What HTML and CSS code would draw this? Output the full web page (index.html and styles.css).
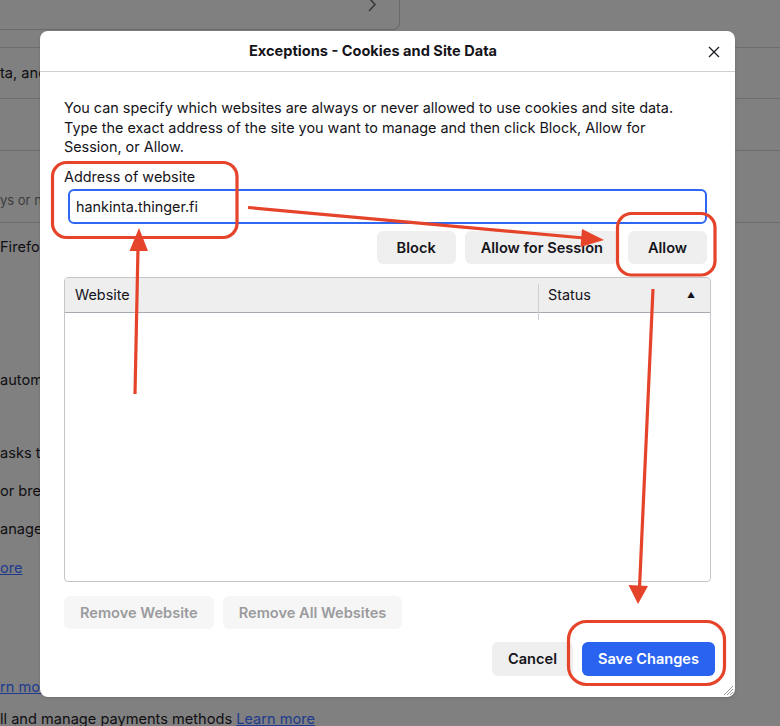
FILE: index.html
```html
<!DOCTYPE html>
<html lang="en">
<head>
<meta charset="utf-8">
<title>Exceptions - Cookies and Site Data</title>
<link rel="stylesheet" href="styles.css">
</head>
<body>
<div class="page">
  <div class="topcard">
    <svg class="chev" width="12" height="14" viewBox="0 0 12 14"><polyline points="2,-2 8,4.5 2,11" fill="none" stroke="#3a3a3a" stroke-width="1.6"/></svg>
  </div>
  <div class="gap17"></div>
  <div class="bg-row r1"><span class="bg-text">ta, and site data</span></div>
  <div class="bg-row r2"></div>
  <div class="bg-row r3"><span class="bg-small">ys or never</span></div>
  <div class="bg-row r4">
    <p class="bg-line l1">Firefox</p>
    <p class="bg-line l2">automatically</p>
    <p class="bg-line l3">asks to</p>
    <p class="bg-line l4">or breaches</p>
    <p class="bg-line l5">anage</p>
    <p class="bg-line l6"><a class="bg-link">ore</a></p>
    <p class="bg-line l7"><a class="bg-link">rn more</a></p>
    <p class="bg-line l8">ll and manage payments methods <a class="bg-link">Learn more</a></p>
  </div>
</div>

<div class="dialog">
  <div class="dlg-header">
    <h1 class="dlg-title">Exceptions - Cookies and Site Data</h1>
    <svg class="close" width="12" height="12" viewBox="0 0 12 12"><path d="M1 1 L11 11 M11 1 L1 11" stroke="#1c1b22" stroke-width="1.3" fill="none"/></svg>
  </div>
  <div class="dlg-body">
    <p class="desc">You can specify which websites are always or never allowed to use cookies and site data.<br>Type the exact address of the site you want to manage and then click Block, Allow for<br>Session, or Allow.</p>
    <label class="field-label">Address of website</label>
    <div class="input">hankinta.thinger.fi</div>
    <div class="btn-row">
      <button class="btn">Block</button>
      <button class="btn">Allow for Session</button>
      <button class="btn">Allow</button>
    </div>
    <div class="table">
      <div class="thead">
        <div class="th th-site">Website</div>
        <div class="th th-status">Status<span class="sort">&#9650;</span></div>
      </div>
      <div class="tbody"></div>
    </div>
    <div class="remove-row">
      <button class="btn disabled">Remove Website</button>
      <button class="btn disabled">Remove All Websites</button>
    </div>
    <div class="footer">
      <button class="btn">Cancel</button>
      <button class="btn primary">Save Changes</button>
    </div>
  </div>
  <svg class="grip" width="12" height="12" viewBox="0 0 12 12"><path d="M2 11 L11 2 M5 11 L11 5 M8 11 L11 8" stroke="#9a9a9a" stroke-width="1" fill="none"/></svg>
</div>

<svg class="annot" width="780" height="726" viewBox="0 0 780 726">
  <g fill="none" stroke="#e5432a" stroke-width="3.2">
    <rect x="52.5" y="162.5" width="184.5" height="75" rx="14"/>
    <rect x="617.5" y="213.5" width="97.5" height="61.5" rx="14"/>
    <rect x="568.5" y="621.5" width="156" height="63" rx="18"/>
    <line x1="248" y1="207.5" x2="584" y2="238"/>
    <line x1="135" y1="394" x2="138" y2="248"/>
    <line x1="653" y1="289" x2="639.5" y2="588"/>
  </g>
  <g fill="#e5432a">
    <polygon points="604,240 582,229 580.5,247"/>
    <polygon points="139,228 129.5,251 148,251"/>
    <polygon points="638,604 628.5,585 648,586"/>
  </g>
</svg>
</body>
</html>
```
FILE: styles.css
```css
html, body {
  margin: 0;
  padding: 0;
}
body {
  width: 780px;
  height: 726px;
  overflow: hidden;
  background: #808080;
  font-family: Inter, "Liberation Sans", sans-serif;
  position: relative;
}

/* background page (dimmed) */
.page {
  display: flex;
  flex-direction: column;
  color: #0f0e12;
  font-size: 14.6px;
}
.topcard {
  width: 399px;
  height: 29px;
  border-right: 1px solid #6a6a6a;
  border-bottom: 1px solid #6a6a6a;
  border-bottom-right-radius: 7px;
  display: flex;
  justify-content: flex-end;
  align-items: flex-start;
  box-sizing: content-box;
}
.chev {
  margin-right: 20px;
  margin-top: 0;
}
.gap17 { height: 17px; }
.bg-row {
  border-top: 1px solid #6d6d6d;
  display: flex;
  align-items: center;
  white-space: nowrap;
}
.r1 { height: 50px; }
.r2 { height: 51px; }
.r3 { height: 71px; align-items: flex-end; }
.r4 { display: block; border-top: 1px solid #6d6d6d; }
.bg-text { line-height: 20px; }
.bg-small {
  font-size: 13px;
  color: #3c3c3e;
  line-height: 16px;
  margin-bottom: 14px;
}
.bg-line {
  margin: 0;
  line-height: 20px;
  white-space: nowrap;
}
.l1 { margin-top: 14px; }
.l2 { margin-top: 113px; }
.l3 { margin-top: 53px; }
.l4 { margin-top: 18px; }
.l5 { margin-top: 18px; }
.l6 { margin-top: 19px; }
.l7 { margin-top: 99px; }
.l8 { margin-top: 12px; }
.bg-link {
  color: #1d3a8e;
  text-decoration: underline;
}

/* dialog */
.dialog {
  position: absolute;
  left: 40px;
  top: 31px;
  width: 695px;
  height: 666px;
  background: #fff;
  border-radius: 8px;
  color: #15141a;
  display: flex;
  flex-direction: column;
  box-shadow: 0 1px 3px rgba(0,0,0,0.15);
}
.dlg-header {
  height: 40px;
  border-bottom: 1px solid #cfcfd3;
  display: flex;
  align-items: center;
  justify-content: center;
  position: relative;
  flex-shrink: 0;
  padding-right: 29px;
}
.dlg-title {
  margin: 0;
  font-size: 14.6px;
  font-weight: 700;
  line-height: 20px;
}
.close {
  position: absolute;
  right: 15px;
  top: 15px;
}
.dlg-body {
  padding: 26px 24px 0 24px;
  display: flex;
  flex-direction: column;
}
.desc {
  margin: 0;
  font-size: 14.4px;
  line-height: 19.6px;
}
.field-label {
  margin-top: 10px;
  font-size: 14.4px;
  line-height: 19.6px;
}
.input {
  margin: 3px 4px 0 4px;
  height: 31px;
  border: 2px solid #2f66f2;
  border-radius: 6px;
  padding: 0 6px;
  font-size: 14.4px;
  line-height: 31px;
}
.btn-row {
  margin-top: 7px;
  padding-right: 4px;
  display: flex;
  justify-content: flex-end;
  gap: 9px;
}
.btn {
  font-family: inherit;
  font-size: 14.6px;
  font-weight: 600;
  color: #15141a;
  background: #efeff0;
  border: none;
  border-radius: 6px;
  height: 33px;
  min-width: 79px;
  padding: 0 16px;
  margin: 0;
}
.table {
  margin-top: 13px;
  height: 303px;
  border: 1px solid #c4c4c9;
  border-radius: 4px;
  display: flex;
  flex-direction: column;
  overflow: hidden;
}
.thead {
  height: 34px;
  background: #eeeeef;
  border-bottom: 1px solid #a9a9b2;
  display: flex;
  flex-shrink: 0;
}
.th {
  font-size: 14.4px;
  line-height: 34px;
  display: flex;
  align-items: center;
}
.th-site {
  width: 473px;
  padding-left: 10px;
  box-sizing: border-box;
}
.th-status {
  flex: 1;
  padding-left: 10px;
  padding-right: 15px;
  justify-content: space-between;
  position: relative;
}
.th-status::before {
  content: "";
  position: absolute;
  left: 0;
  top: 6px;
  bottom: -8px;
  border-left: 1px solid #d0d0d4;
}
.sort {
  font-size: 8px;
  line-height: 10px;
}
.tbody { flex: 1; }
.remove-row {
  margin-top: 14px;
  display: flex;
  gap: 9px;
}
.btn.disabled {
  background: #f6f6f6;
  color: #9b9b9e;
}
.footer {
  margin-top: 13px;
  margin-right: -4px;
  display: flex;
  justify-content: flex-end;
  gap: 9px;
}
.footer .btn { height: 34px; }
.btn.primary {
  background: #2a63f0;
  color: #fff;
}
.grip {
  position: absolute;
  right: 1px;
  bottom: 1px;
}

.annot {
  position: absolute;
  left: 0;
  top: 0;
  pointer-events: none;
}
```
